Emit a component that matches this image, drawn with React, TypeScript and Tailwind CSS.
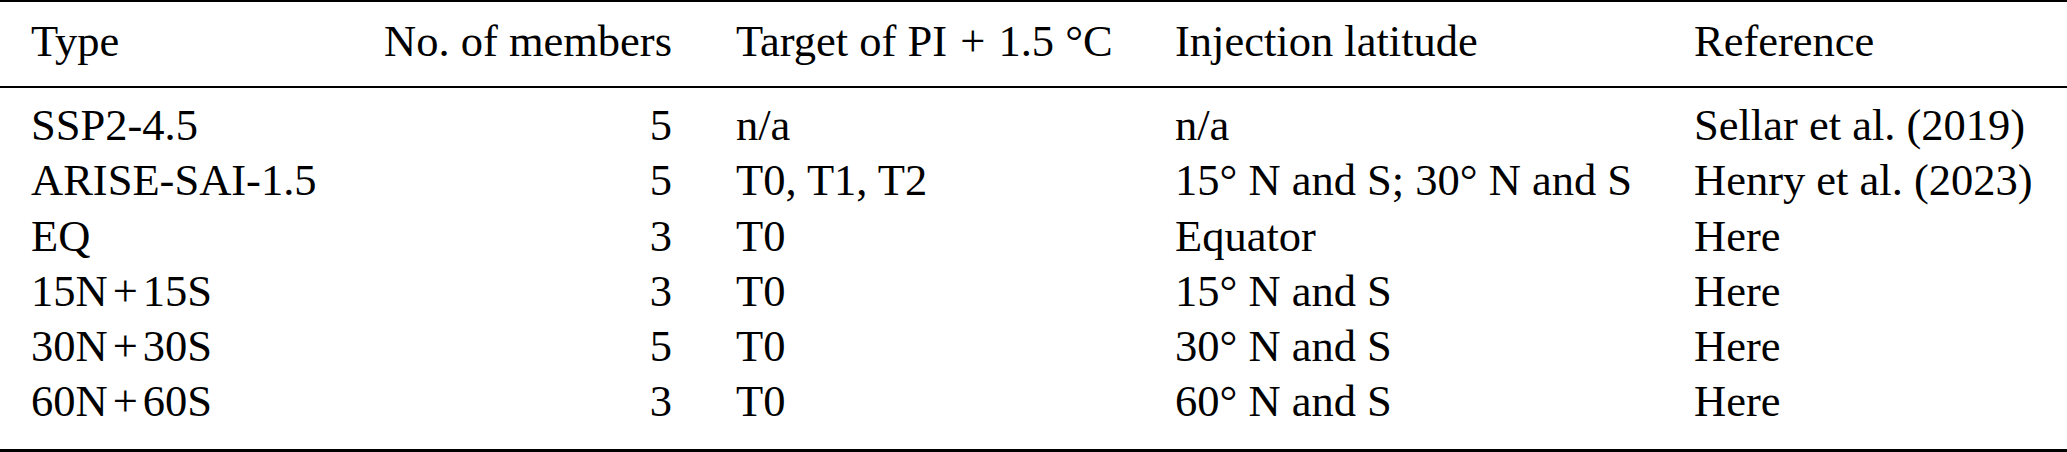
import React from "react";

const Plus = () => <span className="mx-[5px]">+</span>;

const rows: [React.ReactNode, string, string, string, string][] = [
  ["SSP2-4.5", "5", "n/a", "n/a", "Sellar et al. (2019)"],
  ["ARISE-SAI-1.5", "5", "T0, T1, T2", "15° N and S; 30° N and S", "Henry et al. (2023)"],
  ["EQ", "3", "T0", "Equator", "Here"],
  [<>15N<Plus />15S</>, "3", "T0", "15° N and S", "Here"],
  [<>30N<Plus />30S</>, "5", "T0", "30° N and S", "Here"],
  [<>60N<Plus />60S</>, "3", "T0", "60° N and S", "Here"],
];

const gridCls = "grid grid-cols-[241px_400px_503px_519px_1fr] pl-[31px]";

export default function App() {
  return (
    <div
      className="w-[2067px] h-[452px] bg-white text-black text-[44.5px] leading-[55.2px]"
      style={{ fontFamily: '"Liberation Serif", "Times New Roman", serif' }}
    >
      <div className="border-t-2 border-black" />
      <div className={`${gridCls} pt-[12px] pb-[17px]`}>
        <div>Type</div>
        <div className="text-right whitespace-nowrap">No. of members</div>
        <div className="pl-[64px] whitespace-nowrap">
          Target of PI <span className="mx-[2px]">+</span> 1.5 °C
        </div>
        <div className="whitespace-nowrap">Injection latitude</div>
        <div className="whitespace-nowrap">Reference</div>
      </div>
      <div className="border-t-2 border-black" />
      <div className="pt-[10px] pb-[20px]">
        {rows.map((r, i) => (
          <div key={i} className={gridCls}>
            <div className="whitespace-nowrap">{r[0]}</div>
            <div className="text-right">{r[1]}</div>
            <div className="pl-[64px] whitespace-nowrap">{r[2]}</div>
            <div className="whitespace-nowrap">{r[3]}</div>
            <div className="whitespace-nowrap">{r[4]}</div>
          </div>
        ))}
      </div>
      <div className="border-t-[3px] border-black" />
    </div>
  );
}
